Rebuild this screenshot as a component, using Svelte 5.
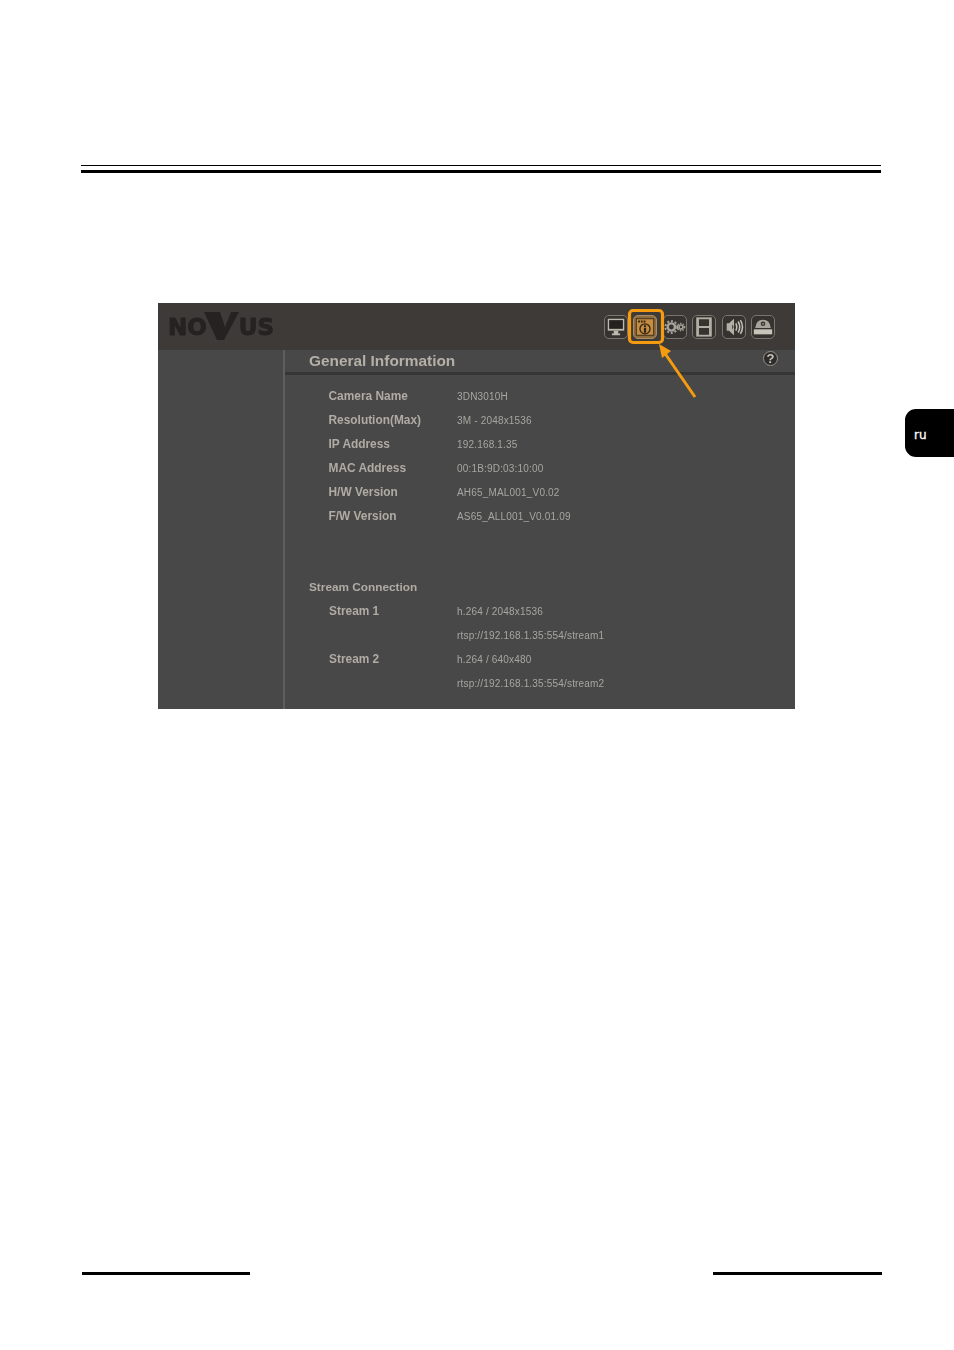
<script>
	const info = [
		["Camera Name", "3DN3010H"],
		["Resolution(Max)", "3M - 2048x1536"],
		["IP Address", "192.168.1.35"],
		["MAC Address", "00:1B:9D:03:10:00"],
		["H/W Version", "AH65_MAL001_V0.02"],
		["F/W Version", "AS65_ALL001_V0.01.09"]
	];
	const streams = [
		["Stream 1", "h.264 / 2048x1536"],
		["", "rtsp://192.168.1.35:554/stream1"],
		["Stream 2", "h.264 / 640x480"],
		["", "rtsp://192.168.1.35:554/stream2"]
	];
</script>

<div class="page">
	<div class="rule-thin"></div>
	<div class="rule-thick"></div>

	<div class="panel">
		<header class="topbar">
			<div class="logo">
				<span>NO</span>
				<svg class="logo-v" viewBox="0 0 36 28" width="36" height="28">
					<path d="M0 0H16L21 15L27 0H35L20 28H13Z" fill="#252322" />
				</svg>
				<span class="us">US</span>
			</div>
			<div class="tools">
				<div class="tool">
					<svg viewBox="0 0 24 24">
						<rect x="3" y="3" width="18" height="13" fill="#bdb9b0" />
						<rect x="4.500" y="4.500" width="15" height="9.500" fill="#24221f" />
						<path d="M9.500 16h5v3h2v2h-9v-2h2z" fill="#bdb9b0" />
					</svg>
				</div>
				<div class="tool active">
					<svg viewBox="0 0 24 24">
						<rect x="2.500" y="3" width="19" height="18" fill="#c58c42" stroke="#3a2d1c" stroke-width="1" />
						<path d="M4.500 5h2v2h-2zM7.500 5h2v2h-2zM10.500 5h2v2h-2z" fill="#2e2416" />
						<circle cx="12" cy="14" r="5.500" fill="none" stroke="#2e2416" stroke-width="1.400" />
						<path d="M10.800 10h2.400v2h-2.400zM10.800 12.800h2.400v5.500h-2.400z" fill="#2e2416" />
					</svg>
				</div>
				<div class="tool">
					<svg viewBox="0 0 24 24">
						<circle cx="8" cy="12" r="4" fill="none" stroke="#a8a49b" stroke-width="2.600" />
						<circle cx="8" cy="12" r="6.500" fill="none" stroke="#a8a49b" stroke-width="2" stroke-dasharray="2.200 2" />
						<circle cx="18.500" cy="12" r="2.200" fill="none" stroke="#a8a49b" stroke-width="1.800" />
						<circle cx="18.500" cy="12" r="4" fill="none" stroke="#a8a49b" stroke-width="1.500" stroke-dasharray="1.500 1.400" />
					</svg>
				</div>
				<div class="tool">
					<svg viewBox="0 0 24 24">
						<rect x="3.500" y="1.500" width="17" height="21" fill="#b3afa5" />
						<path d="M6.500 3.500h11v7.500h-11zM6.500 13h11v7.500h-11z" fill="#35322f" />
					</svg>
				</div>
				<div class="tool">
					<svg viewBox="0 0 24 24">
						<path d="M4 8h2.500L12 3v18l-5.500-5H4z" fill="#b3afa5" />
						<path d="M10 9l1.500 3-1.500 3z" fill="#35322f" />
						<path d="M14 8q2 4 0 8M16.500 6q3.500 6 0 12M19 4.500q4.500 7.500 0 15" fill="none" stroke="#c2beb5" stroke-width="1.700" />
					</svg>
				</div>
				<div class="tool">
					<svg viewBox="0 0 24 24">
						<path d="M3.500 13Q4.500 4 12 4T20.500 13z" fill="#a8a49b" />
						<circle cx="12" cy="8.500" r="2.500" fill="#35322f" />
						<circle cx="12" cy="8.500" r="1" fill="#a8a49b" />
						<rect x="2" y="14.500" width="20" height="5.500" fill="#c8c4ba" />
					</svg>
				</div>
			</div>
		</header>

		<div class="body">
			<aside class="side"></aside>
			<main class="content">
				<div class="title-row">
					<h1>General Information</h1>
					<span class="help">?</span>
				</div>
				<div class="rows">
					{#each info as row}
						<div class="row">
							<span class="label">{row[0]}</span>
							<span class="value">{row[1]}</span>
						</div>
					{/each}
				</div>
				<h2>Stream Connection</h2>
				<div class="rows streams">
					{#each streams as row}
						<div class="row">
							<span class="label">{row[0]}</span>
							<span class="value">{row[1]}</span>
						</div>
					{/each}
				</div>
			</main>
		</div>

		<svg class="callout" viewBox="0 0 637 406" width="637" height="406">
			<rect x="471.500" y="7.500" width="33" height="32" rx="3.500" fill="none" stroke="#f59b0f" stroke-width="3.200" />
			<path d="M537 94L506 49" stroke="#f59b0f" stroke-width="3" fill="none" />
			<path d="M501 41L513 48L504 55Z" fill="#f59b0f" />
		</svg>
	</div>

	<div class="tab">ru</div>

	<footer class="footer">
		<div class="foot-line"></div>
		<div class="foot-line right"></div>
	</footer>
</div>

<style>
	:global(body) {
		background: #fff;
	}
	.page {
		position: relative;
		width: 954px;
		height: 1350px;
		display: flex;
		flex-direction: column;
		padding-top: 165px;
		box-sizing: border-box;
		font-family: "Liberation Sans", Arial, sans-serif;
		overflow: hidden;
	}
	.rule-thin {
		height: 1px;
		margin: 0 73px 0 81px;
		background: #000;
	}
	.rule-thick {
		height: 3px;
		margin: 4px 73px 0 81px;
		background: #000;
	}
	.panel {
		position: relative;
		width: 637px;
		height: 406px;
		margin: 130px 0 0 158px;
		background: #484848;
		display: flex;
		flex-direction: column;
		filter: blur(0.35px);
	}
	.topbar {
		height: 47px;
		flex: none;
		background: #3e3a37;
		display: flex;
		justify-content: space-between;
		align-items: flex-start;
		padding: 0 20px 0 10px;
	}
	.logo {
		display: flex;
		align-items: flex-start;
		color: #252322;
		font-family: "DejaVu Sans", sans-serif;
		font-size: 23px;
		font-weight: 700;
		line-height: 1;
		padding-top: 13px;
		-webkit-text-stroke: 1px #252322;
	}
	.logo-v {
		margin: -4px -1px 0 -3px;
		flex: none;
	}
	.tools {
		display: flex;
		gap: 5.500px;
		padding-top: 12px;
	}
	.tool {
		width: 24px;
		height: 24px;
		box-sizing: border-box;
		border: 1px solid #7a766f;
		border-radius: 5px;
		background: #35322f;
		display: flex;
	}
	.tool svg {
		width: 22px;
		height: 22px;
	}
	.tool.active {
		background: #8f6c3d;
		border-color: #a88d68;
	}
	.body {
		flex: 1;
		display: flex;
	}
	.side {
		width: 125px;
		flex: none;
		border-right: 2px solid #5e5e5e;
	}
	.content {
		flex: 1;
		min-width: 0;
	}
	.title-row {
		height: 22px;
		border-bottom: 3px solid #363636;
		display: flex;
		justify-content: space-between;
		align-items: center;
		padding: 0 17px 0 24px;
	}
	h1 {
		margin: 0;
		font-size: 15.400px;
		font-weight: 700;
		color: #b4afa7;
	}
	.help {
		width: 13px;
		height: 13px;
		margin-top: -5px;
		border-radius: 50%;
		border: 1.500px solid #96928a;
		background: #2e2c2a;
		color: #c8c4bc;
		font-size: 13px;
		font-weight: 700;
		line-height: 13px;
		text-align: center;
	}
	.rows {
		padding: 9px 0 0 43.500px;
	}
	.row {
		height: 24px;
		display: flex;
		align-items: center;
	}
	.label {
		width: 128.500px;
		flex: none;
		font-size: 11.900px;
		font-weight: 700;
		color: #b0aba3;
	}
	.value {
		font-size: 10px;
		letter-spacing: 0.18px;
		color: #a6a6a2;
	}
	h2 {
		margin: 47px 0 0 24px;
		font-size: 11.800px;
		line-height: 24px;
		height: 24px;
		font-weight: 700;
		color: #b0aba3;
	}
	.rows.streams {
		padding: 0 0 0 44px;
	}
	.streams .label {
		width: 128px;
	}
	.callout {
		position: absolute;
		left: 0;
		top: 0;
		pointer-events: none;
	}
	.tab {
		position: absolute;
		left: 905px;
		top: 409px;
		width: 49px;
		height: 48px;
		box-sizing: border-box;
		padding: 19px 0 0 9px;
		background: #000;
		border-radius: 11px 0 0 11px;
		color: #fff;
		font-family: "DejaVu Sans", sans-serif;
		font-size: 12px;
		line-height: 14px;
		-webkit-text-stroke: 0.3px #fff;
	}
	.footer {
		margin-top: auto;
		padding: 0 72px 75px 82px;
		display: flex;
		justify-content: space-between;
	}
	.foot-line {
		width: 168px;
		height: 3px;
		background: #000;
	}
	.foot-line.right {
		width: 169px;
	}
</style>
